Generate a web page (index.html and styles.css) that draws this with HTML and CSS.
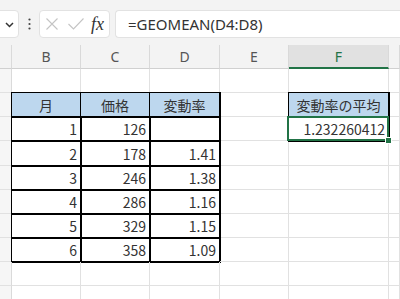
FILE: index.html
```html
<!DOCTYPE html>
<html lang="ja">
<head>
<meta charset="utf-8">
<link rel="stylesheet" href="styles.css">
</head>
<body>
<div class="fbar">
  <div class="namebox">
    <svg class="chev" width="9" height="6" viewBox="0 0 9 6"><path d="M1 1 L4.5 4.5 L8 1" fill="none" stroke="#333" stroke-width="1.5"/></svg>
  </div>
  <div class="grip">
    <svg width="3" height="12" viewBox="0 0 3 12"><circle cx="1.5" cy="1.5" r="1.1" fill="#444"/><circle cx="1.5" cy="6" r="1.1" fill="#444"/><circle cx="1.5" cy="10.5" r="1.1" fill="#444"/></svg>
  </div>
  <div class="fbtns">
    <svg class="ic-x" width="12" height="12" viewBox="0 0 12 12"><path d="M0.5 0.5 L11.5 11.5 M11.5 0.5 L0.5 11.5" stroke="#c4c4c4" stroke-width="1.1" fill="none"/></svg>
    <svg class="ic-ok" width="16" height="12" viewBox="0 0 16 12"><path d="M0.5 6 L5.5 11 L15.5 0.5" stroke="#c4c4c4" stroke-width="1.1" fill="none"/></svg>
    <span class="fx">fx</span>
  </div>
  <div class="finput">=GEOMEAN(D4:D8)</div>
</div>
<div class="sheet">
  <div class="rh corner"></div>
  <div class="ch">B</div>
  <div class="ch">C</div>
  <div class="ch">D</div>
  <div class="ch">E</div>
  <div class="ch ch-sel">F</div>
  <div class="ch"></div>

  <div class="rh"></div><div class="c"></div><div class="c"></div><div class="c"></div><div class="c"></div><div class="c"></div><div class="c"></div>

  <div class="rh rh-tb"></div>
  <div class="c t th">月</div>
  <div class="c t th">価格</div>
  <div class="c t th">変動率</div>
  <div class="c"></div>
  <div class="c t th">変動率の平均</div>
  <div class="c"></div>

  <div class="rh rh-tb"></div>
  <div class="c t n">1</div>
  <div class="c t n">126</div>
  <div class="c t n"></div>
  <div class="c"></div>
  <div class="c t n active"><span class="sel"></span><span class="handle"></span>1.232260412</div>
  <div class="c"></div>

  <div class="rh rh-tb"></div>
  <div class="c t n">2</div><div class="c t n">178</div><div class="c t n">1.41</div>
  <div class="c"></div><div class="c"></div><div class="c"></div>

  <div class="rh rh-tb"></div>
  <div class="c t n">3</div><div class="c t n">246</div><div class="c t n">1.38</div>
  <div class="c"></div><div class="c"></div><div class="c"></div>

  <div class="rh rh-tb"></div>
  <div class="c t n">4</div><div class="c t n">286</div><div class="c t n">1.16</div>
  <div class="c"></div><div class="c"></div><div class="c"></div>

  <div class="rh rh-tb"></div>
  <div class="c t n">5</div><div class="c t n">329</div><div class="c t n">1.15</div>
  <div class="c"></div><div class="c"></div><div class="c"></div>

  <div class="rh rh-tb"></div>
  <div class="c t n">6</div><div class="c t n">358</div><div class="c t n">1.09</div>
  <div class="c"></div><div class="c"></div><div class="c"></div>

  <div class="rh"></div><div class="c"></div><div class="c"></div><div class="c"></div><div class="c"></div><div class="c"></div><div class="c"></div>

  <div class="rh"></div><div class="c"></div><div class="c"></div><div class="c"></div><div class="c"></div><div class="c"></div><div class="c"></div>
</div>
</body>
</html>
```
FILE: styles.css
```css
* { box-sizing: border-box; margin: 0; padding: 0; }
html, body { width: 400px; height: 299px; overflow: hidden; background: #fff; }
body { font-family: "Noto Sans", "Noto Sans CJK JP", sans-serif; color: #333; }

.fbar {
  display: flex;
  align-items: center;
  height: 45px;
  padding: 10px 0 7px;
  background: #f3f3f3;
}
.namebox {
  width: 25px;
  height: 28px;
  margin-left: -6px;
  background: #fff;
  border: 1px solid #e2e2e2;
  border-radius: 4px;
  display: flex;
  align-items: center;
  justify-content: flex-end;
  padding-right: 4px;
}
.chev { margin-top: 2px; }
.grip {
  width: 20px;
  display: flex;
  justify-content: center;
  padding-left: 1px;
}
.fbtns {
  width: 71px;
  height: 28px;
  background: #fff;
  border: 1px solid #e2e2e2;
  border-radius: 4px;
  display: flex;
  align-items: center;
  padding-left: 6px;
}
.ic-ok { margin-left: 10px; }
.fx {
  margin-left: 7px;
  font-family: "Liberation Serif", "DejaVu Serif", serif;
  font-style: italic;
  font-size: 18px;
  color: #333;
  line-height: 1;
}
.finput {
  flex: 1;
  height: 28px;
  margin-left: 5px;
  background: #fff;
  border: 1px solid #e2e2e2;
  border-right: none;
  border-radius: 4px 0 0 4px;
  padding-left: 12px;
  font-size: 15px;
  line-height: 26px;
  color: #333;
  white-space: nowrap;
}

.sheet {
  display: grid;
  grid-template-columns: 12px 69px 69px 70px 69px 100px 1fr;
  grid-template-rows: 24px 24px 24px 24px 25px 24px 24px 24px 24px 24px 24px;
}
.rh {
  background: #f6f6f6;
  border-right: 1px solid #dadada;
  border-bottom: 1px solid #e1e1e1;
}
.rh.corner { background: #f3f3f3; border-bottom: 1px solid #d0d0d0; }
.rh-tb { border-right-color: #000; }
.ch {
  background: #f3f3f3;
  border-right: 1px solid #d9d9d9;
  border-bottom: 1px solid #d0d0d0;
  display: flex;
  align-items: center;
  justify-content: center;
  font-size: 14px;
  color: #555;
}
.ch-sel {
  background: #e1e1e1;
  color: #217346;
  border-bottom: 2px solid #217346;
}
.c {
  border-right: 1px solid #e1e1e1;
  border-bottom: 1px solid #e1e1e1;
  font-family: "Noto Sans CJK JP", sans-serif;
  font-size: 14px;
  line-height: 20px;
  display: flex;
  align-items: flex-end;
  padding-bottom: 1px;
  white-space: nowrap;
  color: #333;
}
.t {
  border-right-color: #000;
  border-bottom-color: #000;
  box-shadow: 0 0 0 1px #000;
}
.th {
  background: #bdd7ee;
  justify-content: center;
}
.n {
  justify-content: flex-end;
  padding-right: 3px;
}
.active { position: relative; z-index: 1; }
.sel {
  position: absolute;
  left: -2px;
  top: -1px;
  right: -1px;
  bottom: -1px;
  border: 2px solid #217346;
}
.handle {
  position: absolute;
  right: -4px;
  bottom: -4px;
  width: 7px;
  height: 7px;
  background: #217346;
  border: 1px solid #fff;
}
```
